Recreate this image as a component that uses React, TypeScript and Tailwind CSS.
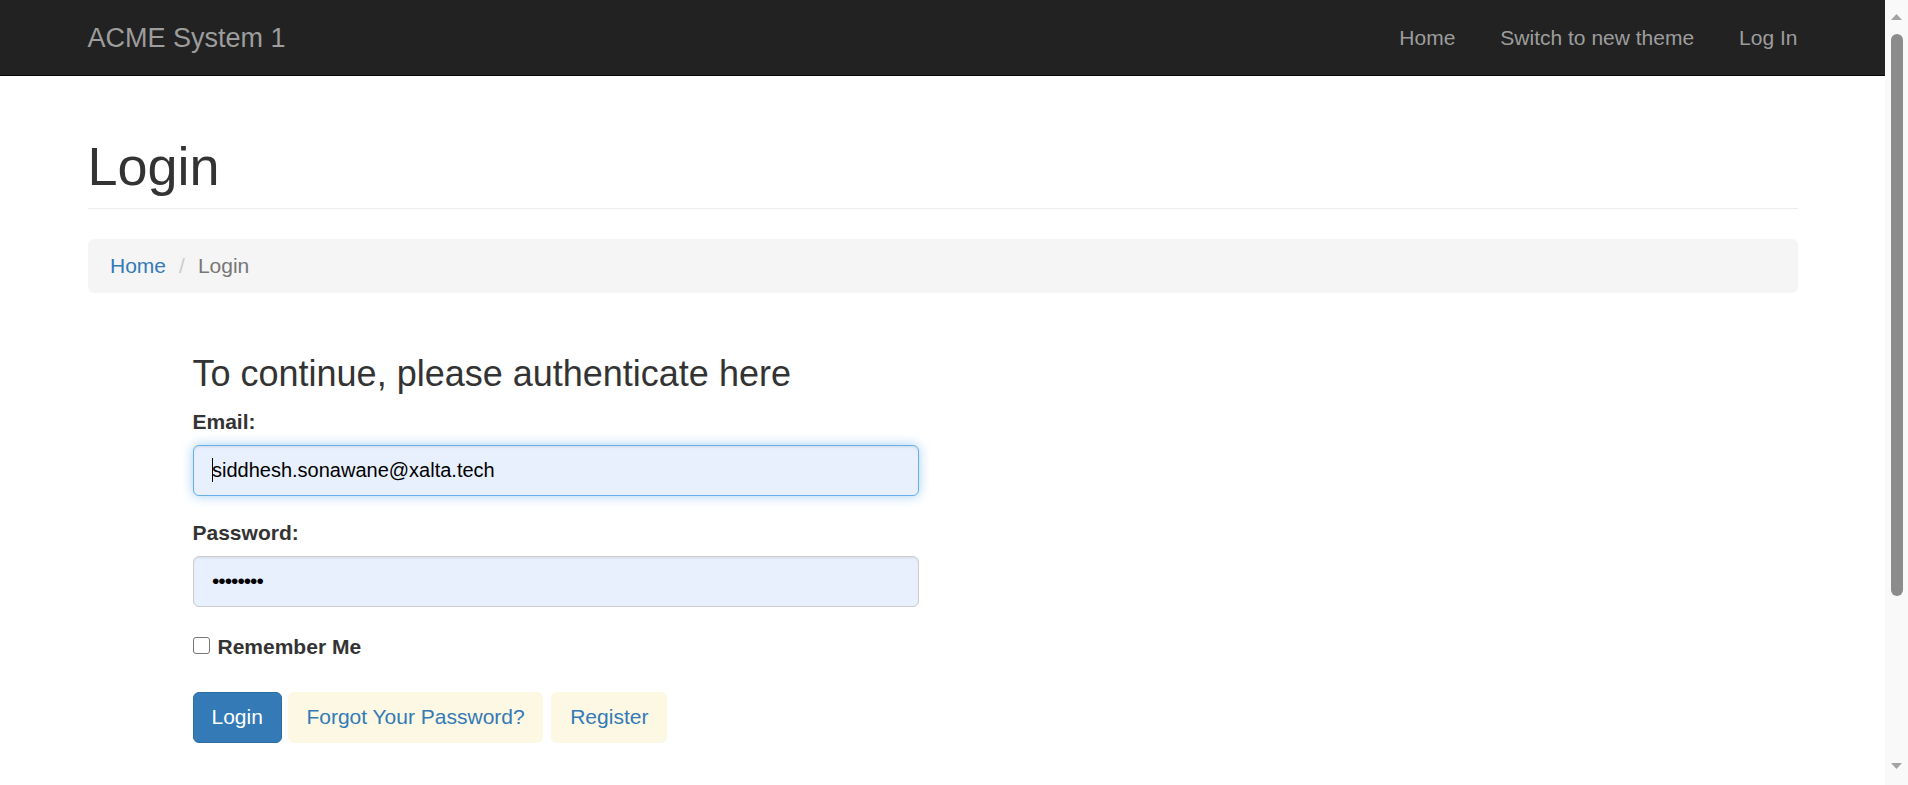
const navLinks = ["Home", "Switch to new theme", "Log In"];

function Scrollbar() {
  return (
    <div className="flex w-[23px] shrink-0 flex-col items-center bg-[#f9f9f9]">
      <svg className="mt-[14px]" width="11" height="6" viewBox="0 0 11 6">
        <polygon points="5.5,0 11,6 0,6" fill="#a3a3a3" />
      </svg>
      <div className="mt-[14px] h-[562px] w-[12px] rounded-full bg-[#8c8c8c]" />
      <div className="flex-1" />
      <svg className="mb-[16px]" width="11" height="6" viewBox="0 0 11 6">
        <polygon points="0,0 11,0 5.5,6" fill="#a3a3a3" />
      </svg>
    </div>
  );
}

export default function App() {
  return (
    <div className="flex h-screen overflow-hidden bg-white font-['Liberation_Sans',Arial,sans-serif] text-[#333]">
      <div className="flex min-w-0 flex-1 flex-col">
        {/* Navbar */}
        <header className="h-[76px] border-b border-[#080808] bg-[#222]">
          <div className="mx-auto flex h-[75px] w-[1710px] items-center justify-between">
            <span className="text-[27px] leading-[30px] text-[#9d9d9d]">ACME System 1</span>
            <nav className="flex items-center gap-[45px] text-[21px] leading-[30px] text-[#9d9d9d]">
              {navLinks.map((label) => (
                <a key={label} href="#">
                  {label}
                </a>
              ))}
            </nav>
          </div>
        </header>

        <main className="mx-auto w-[1710px]">
          <div className="mt-[61px] border-b border-[#eee] pb-[12px]">
            <h1 className="text-[54px] leading-[59px]">Login</h1>
          </div>

          <ol className="mt-[30px] flex h-[54px] items-center rounded-[6px] bg-[#f5f5f5] px-[22.5px] text-[21px] leading-[30px]">
            <li>
              <a href="#" className="text-[#337ab7]">
                Home
              </a>
            </li>
            <li className="px-[13px] text-[#ccc]">/</li>
            <li className="text-[#777]">Login</li>
          </ol>

          <div className="ml-[105px] mt-[60px] w-[726px]">
            <h3 className="mb-[13px] pt-px text-[36px] leading-[40px]">To continue, please authenticate here</h3>

            <label className="mb-[7.5px] block text-[21px] font-bold leading-[30px]">Email:</label>
            <div className="flex h-[51px] items-center rounded-[6px] border border-[#66afe9] bg-[#e8f0fe] px-[18.5px] text-[20px] text-black shadow-[inset_0_1.5px_1.5px_rgba(0,0,0,0.075),0_0_12px_rgba(102,175,233,0.6)]">
              <span className="-mr-px h-[24px] w-px bg-black" />
              <span>siddhesh.sonawane@xalta.tech</span>
            </div>

            <label className="mb-[7.5px] mt-[22.5px] block text-[21px] font-bold leading-[30px]">Password:</label>
            <div className="flex h-[51px] items-center rounded-[6px] border border-[#ccc] bg-[#e8f0fe] px-[18.5px] text-[21px] tracking-[-1px] text-black shadow-[inset_0_1.5px_1.5px_rgba(0,0,0,0.075)]">
              ••••••••
            </div>

            <label className="mt-[25px] flex h-[30px] items-center text-[21px] font-bold">
              <input
                type="checkbox"
                className="-mt-[3px] h-[17px] w-[17px] appearance-none rounded-[3px] border-[1.5px] border-[#767676] bg-white"
              />
              <span className="ml-[8px]">Remember Me</span>
            </label>

            <div className="mt-[30px] flex gap-[6px] text-[21px] leading-[30px]">
              <button className="h-[51px] rounded-[6px] border border-[#2e6da4] bg-[#337ab7] px-[18px] text-white">
                Login
              </button>
              <a href="#" className="flex h-[51px] items-center rounded-[6px] bg-[#fcf8e3] px-[18.5px] text-[#337ab7]">
                Forgot Your Password?
              </a>
              <a href="#" className="ml-[2px] flex h-[51px] items-center rounded-[6px] bg-[#fcf8e3] px-[19px] text-[#337ab7]">
                Register
              </a>
            </div>
          </div>
        </main>
      </div>
      <Scrollbar />
    </div>
  );
}
